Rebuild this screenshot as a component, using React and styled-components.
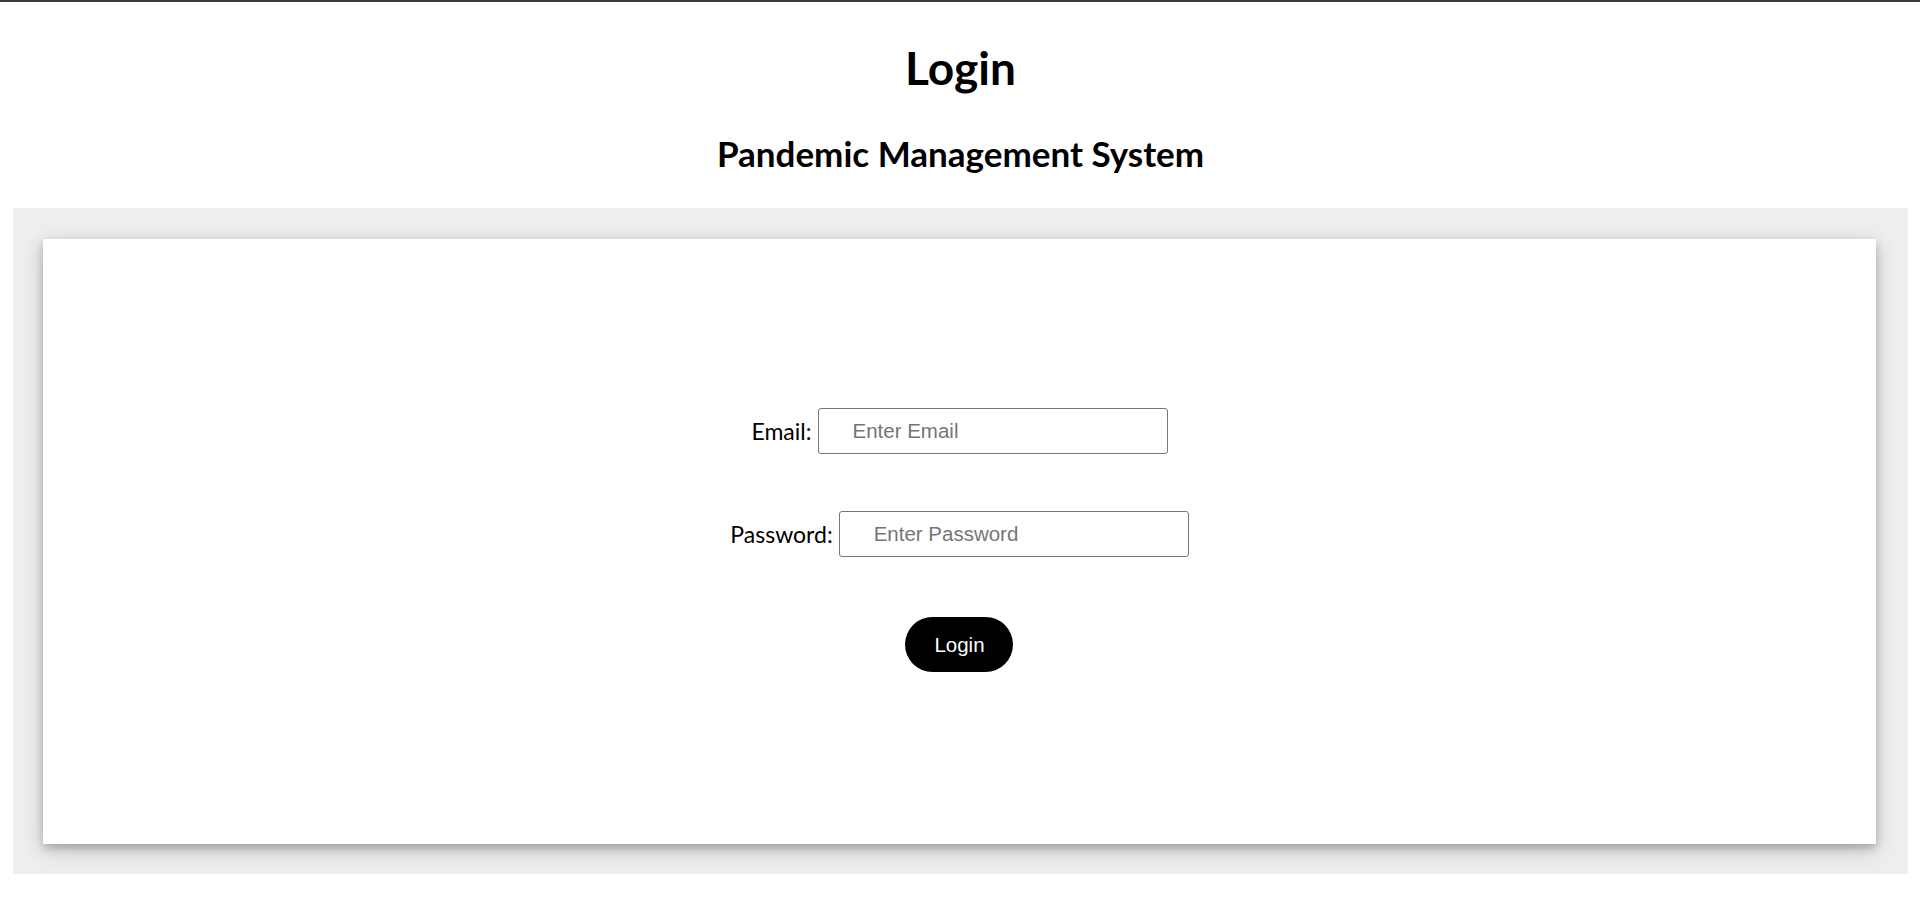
import React from "react";
import styled, { createGlobalStyle } from "styled-components";

const GlobalStyle = createGlobalStyle`
  html, body {
    margin: 0;
    padding: 0;
    background: #ffffff;
  }
  body {
    border-top: 2px solid #3a3a3a;
    font-family: "Lato", "Open Sans", sans-serif;
    color: #000;
  }
`;

const Page = styled.div`
  display: flex;
  flex-direction: column;
  padding: 0 12px 30px 13px;
`;

const Header = styled.header`
  display: flex;
  flex-direction: column;
  align-items: center;
  height: 206px;
  padding-top: 39px;
  box-sizing: border-box;
`;

const Title = styled.h1`
  margin: 0;
  font-size: 46px;
  line-height: 53px;
  font-weight: 700;
`;

const Subtitle = styled.h2`
  margin: 39px 0 0;
  font-size: 35px;
  line-height: 40px;
  font-weight: 700;
`;

const Backdrop = styled.section`
  background: #eeeeee;
  padding: 31px 32px 30px 30px;
`;

const Card = styled.div`
  background: #ffffff;
  height: 605px;
  box-shadow: 0 4px 8px 0 rgba(0, 0, 0, 0.2), 0 6px 20px 0 rgba(0, 0, 0, 0.19);
  display: flex;
  align-items: center;
  justify-content: center;
`;

const Form = styled.form`
  display: flex;
  flex-direction: column;
  align-items: center;
  margin-top: -3px;
`;

const Row = styled.div`
  display: flex;
  align-items: center;
  justify-content: center;
  gap: 6px;
  margin-bottom: ${(p) => p.$space}px;
`;

const Label = styled.label`
  font-family: "Lato", "Open Sans", sans-serif;
  font-size: 23px;
  color: #000;
`;

const Input = styled.input`
  box-sizing: border-box;
  width: 350px;
  height: 46px;
  border: 1px solid #767676;
  border-radius: 3px;
  padding: 0 10px 0 34px;
  font-family: "Liberation Sans", Arial, sans-serif;
  font-size: 20.5px;
  color: #000;
  background: #fff;
  outline: none;
  &::placeholder {
    color: #757575;
  }
`;

const Button = styled.button`
  box-sizing: border-box;
  width: 108px;
  height: 55px;
  border: none;
  border-radius: 28px;
  background: #000;
  color: #fff;
  font-family: "Liberation Sans", Arial, sans-serif;
  font-size: 20.5px;
  cursor: pointer;
`;

export default function App() {
  return (
    <>
      <GlobalStyle />
      <Page>
        <Header>
          <Title>Login</Title>
          <Subtitle>Pandemic Management System</Subtitle>
        </Header>
        <Backdrop>
          <Card>
            <Form onSubmit={(e) => e.preventDefault()}>
              <Row $space={57}>
                <Label htmlFor="email">Email:</Label>
                <Input id="email" type="email" placeholder="Enter Email" />
              </Row>
              <Row $space={60}>
                <Label htmlFor="password">Password:</Label>
                <Input id="password" type="password" placeholder="Enter Password" />
              </Row>
              <Button type="submit">Login</Button>
            </Form>
          </Card>
        </Backdrop>
      </Page>
    </>
  );
}
